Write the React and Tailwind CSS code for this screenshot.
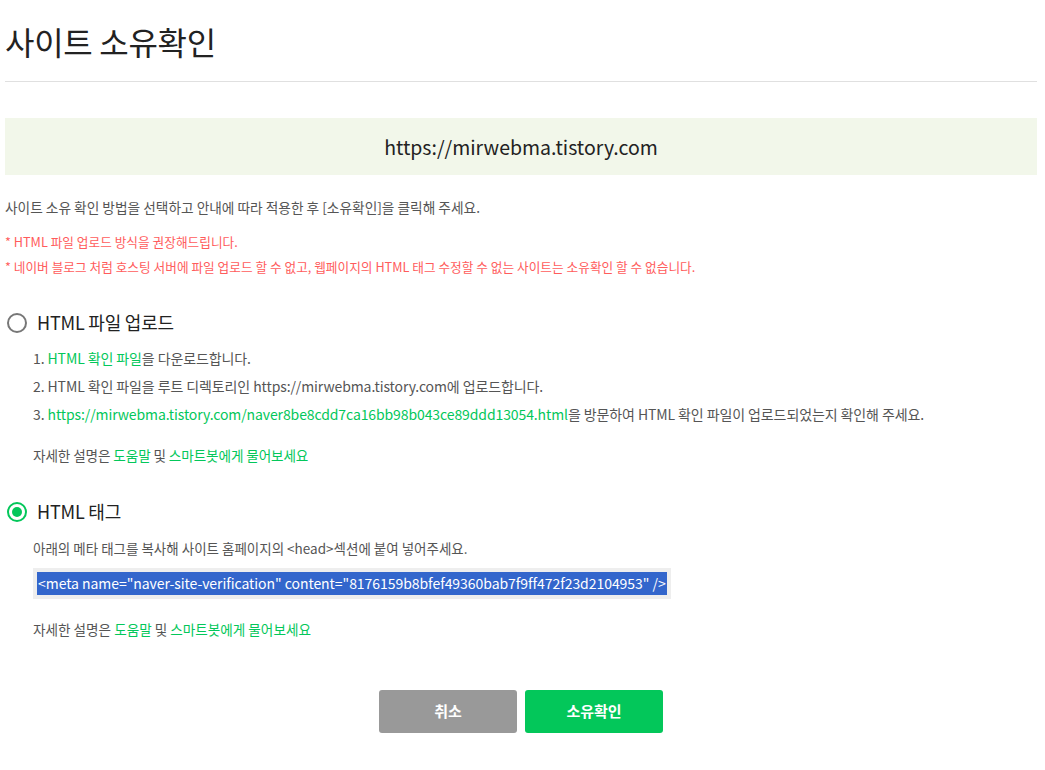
import React, { useState } from 'react';

const font = { fontFamily: '"Noto Sans CJK KR", "Noto Sans", sans-serif' };

function Radio({ checked }) {
  return checked ? (
    <span className="flex h-[20px] w-[20px] items-center justify-center rounded-full border-2 border-[#03c75a]">
      <span className="h-[10px] w-[10px] rounded-full bg-[#03c75a]" />
    </span>
  ) : (
    <span className="h-[20px] w-[20px] rounded-full border-2 border-[#777]" />
  );
}

function HelpLine() {
  return (
    <p className="text-[13.6px] leading-[20px] text-[#555]">
      자세한 설명은 <span className="text-[#03c75a]">도움말</span> 및{' '}
      <span className="text-[#03c75a]">스마트봇에게 물어보세요</span>
    </p>
  );
}

export default function App() {
  const [method, setMethod] = useState('tag');

  return (
    <div className="min-h-[770px] bg-white pl-[5px] pr-[8px]" style={font}>
      {/* Header */}
      <h1 className="pt-[19px] pb-[18px] text-[32px] leading-[44px] text-[#222] tracking-[-0.3px]">
        사이트 소유확인
      </h1>
      <div className="h-px bg-[#e0e0e0]" />

      {/* Site URL */}
      <div className="mt-[36px] flex h-[57px] items-center justify-center bg-[#f2f7ea] text-[19.5px] text-[#222]">
        https://mirwebma.tistory.com
      </div>

      <p className="mt-[22px] text-[13.7px] leading-[20px] text-[#555]">
        사이트 소유 확인 방법을 선택하고 안내에 따라 적용한 후 [소유확인]을 클릭해 주세요.
      </p>
      <div className="mt-[15px] space-y-[6px] text-[12.7px] leading-[19px] text-[#ff5c5c]">
        <p>* HTML 파일 업로드 방식을 권장해드립니다.</p>
        <p>* 네이버 블로그 처럼 호스팅 서버에 파일 업로드 할 수 없고, 웹페이지의 HTML 태그 수정할 수 없는 사이트는 소유확인 할 수 없습니다.</p>
      </div>

      {/* HTML file upload */}
      <button
        type="button"
        onClick={() => setMethod('file')}
        className="mt-[33px] ml-[2px] flex items-center gap-[10px] text-[18px] text-[#222]"
      >
        <Radio checked={method === 'file'} />
        <span className="tracking-[-0.2px]">HTML 파일 업로드</span>
      </button>
      <div className="ml-[28px] mt-[8px] text-[14px] leading-[28px] tracking-[-0.1px] text-[#555]">
        <p>
          1. <span className="text-[#03c75a]">HTML 확인 파일</span>을 다운로드합니다.
        </p>
        <p>2. HTML 확인 파일을 루트 디렉토리인 https://mirwebma.tistory.com에 업로드합니다.</p>
        <p>
          3.{' '}
          <span className="text-[#03c75a]">
            https://mirwebma.tistory.com/naver8be8cdd7ca16bb98b043ce89ddd13054.html
          </span>
          을 방문하여 HTML 확인 파일이 업로드되었는지 확인해 주세요.
        </p>
        <div className="mt-[17px]">
          <HelpLine />
        </div>
      </div>

      {/* HTML tag */}
      <button
        type="button"
        onClick={() => setMethod('tag')}
        className="mt-[33px] ml-[2px] flex items-center gap-[10px] text-[18px] text-[#222]"
      >
        <Radio checked={method === 'tag'} />
        <span className="tracking-[-0.2px]">HTML 태그</span>
      </button>
      <div className="ml-[28px] mt-[13px]">
        <p className="text-[13.5px] leading-[20px] text-[#555]">
          아래의 메타 태그를 복사해 사이트 홈페이지의 &lt;head&gt;섹션에 붙여 넣어주세요.
        </p>
        <div className="mt-[10px] inline-block bg-[#eeeeee] px-[4px] py-[4px]">
          <span className="block bg-[#3366cc] px-[1px] text-[14px] leading-[23px] tracking-[-0.05px] text-white">
            &lt;meta name="naver-site-verification" content="8176159b8bfef49360bab7f9ff472f23d2104953" /&gt;
          </span>
        </div>
        <div className="mt-[20px]">
          <HelpLine />
        </div>
      </div>

      {/* Actions */}
      <div className="mt-[51px] flex justify-center gap-[8px]">
        <button
          type="button"
          className="h-[43px] w-[138px] rounded-[3px] bg-[#999999] text-[15px] font-bold text-white"
        >
          취소
        </button>
        <button
          type="button"
          className="h-[43px] w-[138px] rounded-[3px] bg-[#03c75a] text-[15px] font-bold text-white"
        >
          소유확인
        </button>
      </div>
    </div>
  );
}
